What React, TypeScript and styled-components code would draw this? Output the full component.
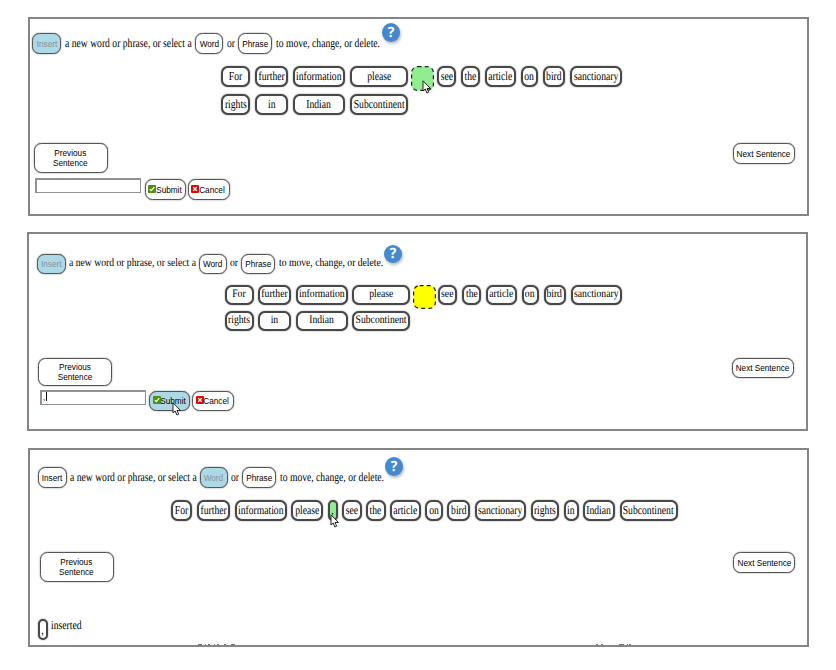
import React from "react";
import styled, { createGlobalStyle } from "styled-components";

const Global = createGlobalStyle`
  * { box-sizing: border-box; }
  body { margin: 0; background: #fff; }
`;

type Metrics = { serif: number; serifX: number; sans: number; sansX: number; h: number };
const tall: Metrics = { serif: 12.2, serifX: 0.79, sans: 9.6, sansX: 0.855, h: 21 };
const short: Metrics = { serif: 11.4, serifX: 0.847, sans: 9, sansX: 0.91, h: 19.5 };

const Page = styled.main`
  display: flex;
  flex-direction: column;
  width: 836px;
  height: 670px;
  overflow: hidden;
  color: #000;
  text-rendering: geometricPrecision;
`;

const Panel = styled.section<{ $left: number; $gap: number; $h: number; $m: Metrics }>`
  display: flex;
  flex-direction: column;
  flex: none;
  width: 781px;
  height: ${(p) => p.$h}px;
  margin-left: ${(p) => p.$left}px;
  margin-top: ${(p) => p.$gap}px;
  border: 2px solid #858585;
  overflow: hidden;
  --serif: ${(p) => p.$m.serif}px;
  --serif-x: ${(p) => p.$m.serifX};
  --sans: ${(p) => p.$m.sans}px;
  --sans-x: ${(p) => p.$m.sansX};
  --h: ${(p) => p.$m.h}px;
`;

const Row = styled.div<{ $left: number; $top: number; $h: number }>`
  display: flex;
  align-items: flex-start;
  flex: none;
  height: ${(p) => p.$h}px;
  padding-left: ${(p) => p.$left}px;
  margin-top: ${(p) => p.$top}px;
`;

const Label = styled.span<{ $ox?: string }>`
  display: block;
  flex: none;
  white-space: nowrap;
  transform: scaleX(var(--serif-x));
  transform-origin: ${(p) => p.$ox || "center"} center;
`;

const Chip = styled.span<{ $gap: number; $w: number; $bg?: string; $drop?: number }>`
  display: flex;
  position: relative;
  flex: none;
  justify-content: center;
  width: ${(p) => p.$w}px;
  height: var(--h);
  margin-left: ${(p) => p.$gap}px;
  padding-top: ${(p) => p.$drop || 0}px;
  border: 2px solid #484848;
  border-radius: 7px;
  box-shadow: 0 0 1.5px rgba(0, 0, 0, 0.55);
  background: ${(p) => p.$bg || "#fff"};
  font: var(--serif) / calc(var(--h) - 4px) "Liberation Serif", serif;
`;

const SlotBox = styled.span<{ $gap: number; $h: number }>`
  display: block;
  position: relative;
  flex: none;
  width: 23px;
  height: ${(p) => p.$h}px;
  margin-left: ${(p) => p.$gap}px;
`;

const SlotOutline = styled.svg`
  display: block;
  width: 100%;
  height: 100%;
`;

const Copy = styled.span<{ $gap: number; $w: number; $lift?: number }>`
  display: block;
  flex: none;
  width: ${(p) => p.$w}px;
  margin-left: ${(p) => p.$gap}px;
  margin-top: -${(p) => p.$lift || 0}px;
  font: var(--serif) / var(--h) "Liberation Serif", serif;
`;

const Button = styled.button<{ $gap?: number; $w: number; $active?: boolean; $dim?: boolean; $h?: number }>`
  display: flex;
  position: relative;
  flex: none;
  align-items: center;
  justify-content: center;
  padding: 0;
  width: ${(p) => p.$w}px;
  height: ${(p) => (p.$h ? p.$h + "px" : "var(--h)")};
  margin-left: ${(p) => p.$gap || 0}px;
  border: 1px solid #555;
  border-radius: 7.5px;
  box-shadow: 0 0 1.5px rgba(0, 0, 0, 0.6);
  background: ${(p) => (p.$active ? "#add8e6" : "#fff")};
  color: ${(p) => (p.$dim ? "#85939a" : "#000")};
  font: var(--sans) / 10px "Liberation Sans", sans-serif;
  ${Label} {
    transform: scaleX(var(--sans-x));
    text-align: center;
  }
`;

const TextField = styled.div`
  flex: none;
  width: 106px;
  height: 15px;
  padding-left: 1px;
  border: 2px solid #929292;
  border-right-width: 1px;
  border-bottom-width: 1px;
  background: #fff;
  font: 10px / 11px "Liberation Serif", serif;
  color: #a44;
`;

const Caret = styled.i`
  display: inline-block;
  width: 1px;
  height: 9px;
  background: #111;
  vertical-align: -1px;
`;

const HelpBadge = styled.span<{ $gap: number; $h: number }>`
  flex: none;
  width: 18px;
  height: ${(p) => p.$h}px;
  margin-left: ${(p) => p.$gap}px;
  border-radius: 50%;
  background: #4489d0;
  box-shadow: 1px 2px 3px rgba(0, 0, 0, 0.28);
  color: #fff;
  text-align: center;
  font: bold 14px / ${(p) => p.$h}px "Open Sans", sans-serif;
`;

const Group = styled.div<{ $top: number }>`
  display: flex;
  flex: none;
  margin-top: ${(p) => p.$top}px;
`;

const Mark = styled.svg`
  flex: none;
  width: 8px;
  height: 8px;
  margin: -2px -2px 0 1px;
`;

const CursorSvg = styled.svg<{ $x: number; $y: number }>`
  position: absolute;
  z-index: 2;
  left: ${(p) => p.$x}px;
  top: ${(p) => p.$y}px;
  width: 10px;
  height: 14px;
  overflow: visible;
`;

const Cropped = styled.svg`
  display: block;
  flex: none;
  width: 440px;
  height: 1px;
`;

const Cursor = ({ x, y }: { x: number; y: number }) => (
  <CursorSvg $x={x} $y={y} viewBox="0 0 10 14">
    <path d="M1 .8V11l2.2-2 1.7 4 1.8-.8L5 8.5h3.5z" fill="#fff" stroke="#222" strokeWidth="1" />
  </CursorSvg>
);

const Slot = ({ gap, h, color, children }: { gap: number; h: number; color: string; children?: React.ReactNode }) => (
  <SlotBox $gap={gap} $h={h}>
    <SlotOutline viewBox={`0 0 23 ${h}`}>
      <rect x=".6" y=".6" width="21.8" height={h - 1.2} rx="6" fill={color} stroke="#222" strokeWidth="1.2" strokeDasharray="4 3.2" />
    </SlotOutline>
    {children}
  </SlotBox>
);

const Tick = () => (
  <Mark viewBox="0 0 8 8">
    <rect width="8" height="8" rx="1" fill="#4e920c" />
    <path d="M1.8 4.2l1.5 1.5 3-3.6" fill="none" stroke="#fff" strokeWidth="1.2" />
  </Mark>
);

const Cross = () => (
  <Mark viewBox="0 0 8 8">
    <rect width="8" height="8" rx="1" fill="#e50808" />
    <path d="M2.3 2.3l3.4 3.4M5.7 2.3L2.3 5.7" stroke="#fff" strokeWidth="1.3" />
  </Mark>
);

type Item = [string, number, number];
const words = (list: Item[]) =>
  list.map(([t, gap, w]) => (
    <Chip key={t} $gap={gap} $w={w}>
      <Label>{t}</Label>
    </Chip>
  ));

type ToolbarProps = { left: number; top: number; active: "Insert" | "Word"; h: number; drop: number; badge: number; tight?: number };
function Toolbar({ left, top, active, h, drop, badge, tight = 0 }: ToolbarProps) {
  return (
    <Row $left={left} $top={top} $h={h}>
      <Group $top={drop}>
        <Button $w={29} $active={active === "Insert"} $dim={active === "Insert"}><Label>Insert</Label></Button>
        <Copy $gap={3.5} $w={128 - tight}><Label $ox="left">a new word or phrase, or select a</Label></Copy>
        <Button $gap={2.5} $w={28} $active={active === "Word"} $dim={active === "Word"}><Label>Word</Label></Button>
        <Copy $gap={4 - tight / 2} $w={8}><Label $ox="left">or</Label></Copy>
        <Button $gap={3} $w={34}><Label>Phrase</Label></Button>
        <Copy $gap={3.5} $w={104 - tight}><Label $ox="left">to move, change, or delete.</Label></Copy>
      </Group>
      <HelpBadge $gap={2.5} $h={badge}>?</HelpBadge>
    </Row>
  );
}

function Navigation({ left, top, h, next }: { left: number; top: number; h: number; next: number }) {
  return (
    <Row $left={left} $top={top} $h={h}>
      <Button $w={74} $h={h}><Label>Previous<br />Sentence</Label></Button>
      <Button $gap={next} $w={62}><Label>Next Sentence</Label></Button>
    </Row>
  );
}

function EntryForm({ left, top, gap, filled }: { left: number; top: number; gap: number; filled?: boolean }) {
  return (
    <Row $left={left} $top={top} $h={22}>
      <TextField>{filled && <>,<Caret /></>}</TextField>
      <Group $top={1}>
        <Button $gap={gap} $w={41} $active={filled}>
          <Tick /><Label>Submit</Label>
          {filled && <Cursor x={22} y={10} />}
        </Button>
        <Button $gap={2} $w={41.5}><Cross /><Label>Cancel</Label></Button>
      </Group>
    </Row>
  );
}

export default function App() {
  return (
    <Page>
      <Global />
      <Panel $left={28} $gap={17} $h={199} $m={tall}>
        <Toolbar left={2} top={4} active="Insert" h={31} drop={10} badge={19} />
        <Row $left={191} $top={12} $h={28}>
          {words([["For", 0, 29], ["further", 5, 33], ["information", 5, 52], ["please", 5, 58]])}
          <Slot gap={3} color="#90ee90" h={25}><Cursor x={11} y={14} /></Slot>
          {words([["see", 3, 19], ["the", 5, 19], ["article", 5, 31], ["on", 5, 17], ["bird", 5, 22], ["sanctionary", 5, 52]])}
        </Row>
        <Row $left={191} $top={0} $h={21}>
          {words([["rights", 0, 29], ["in", 5, 33], ["Indian", 5, 52], ["Subcontinent", 5, 58]])}
        </Row>
        <Navigation left={3.5} top={28} h={30} next={625} />
        <EntryForm left={5} top={5} gap={4} />
      </Panel>

      <Panel $left={27} $gap={16} $h={199} $m={short}>
        <Toolbar left={7.5} top={11} active="Insert" h={28} drop={9} badge={18} tight={1} />
        <Row $left={196} $top={12} $h={26}>
          {words([["For", 0, 28.5], ["further", 4.5, 33], ["information", 4.5, 52], ["please", 4.5, 58]])}
          <Slot gap={2.5} color="#ffff00" h={24} />
          {words([["see", 2.5, 19], ["the", 5, 19], ["article", 4.5, 31], ["on", 5, 17], ["bird", 5, 22], ["sanctionary", 5, 51]])}
        </Row>
        <Row $left={196} $top={0} $h={20}>
          {words([["rights", 0, 28.5], ["in", 4.5, 33], ["Indian", 4.5, 52], ["Subcontinent", 4.5, 58]])}
        </Row>
        <Navigation left={9} top={27} h={28} next={620} />
        <EntryForm left={11} top={4} gap={3} filled />
      </Panel>

      <Panel $left={28} $gap={17} $h={199} $m={tall}>
        <Toolbar left={7.7} top={7} active="Word" h={31} drop={10} badge={19} tight={1} />
        <Row $left={141} $top={12} $h={21}>
          {words([["For", 0, 21], ["further", 5, 33], ["information", 4.5, 52], ["please", 4.5, 32]])}
          <Chip $gap={4.5} $w={10} $bg="#90ee90"><Label>,</Label><Cursor x={0} y={12} /></Chip>
          {words([["see", 4.5, 19.5], ["the", 4.5, 19.5], ["article", 4.5, 30.5], ["on", 4.5, 17.5], ["bird", 4.5, 23], ["sanctionary", 4.5, 51.5], ["rights", 4.5, 28.5], ["in", 4.5, 15], ["Indian", 4.5, 32], ["Subcontinent", 4.5, 58]])}
        </Row>
        <Navigation left={9.5} top={31} h={30} next={619.5} />
        <Row $left={8} $top={37} $h={25}>
          <Chip $gap={0} $w={10} $drop={1}><Label>,</Label></Chip>
          <Copy $gap={3} $w={30} $lift={4}><Label $ox="left">inserted</Label></Copy>
        </Row>
        <Row $left={167} $top={0} $h={1}>
          <Cropped viewBox="0 0 440 1">
            <path d="M1 .5h4M8 .5h1M11 .5h2M17 .5h1M20 .5h2M27 .5h2M34 .5h4M399 .5h2M404 .5h2M422 .5h5M430 .5h1M432 .5h2" stroke="#777" />
          </Cropped>
        </Row>
      </Panel>
    </Page>
  );
}
